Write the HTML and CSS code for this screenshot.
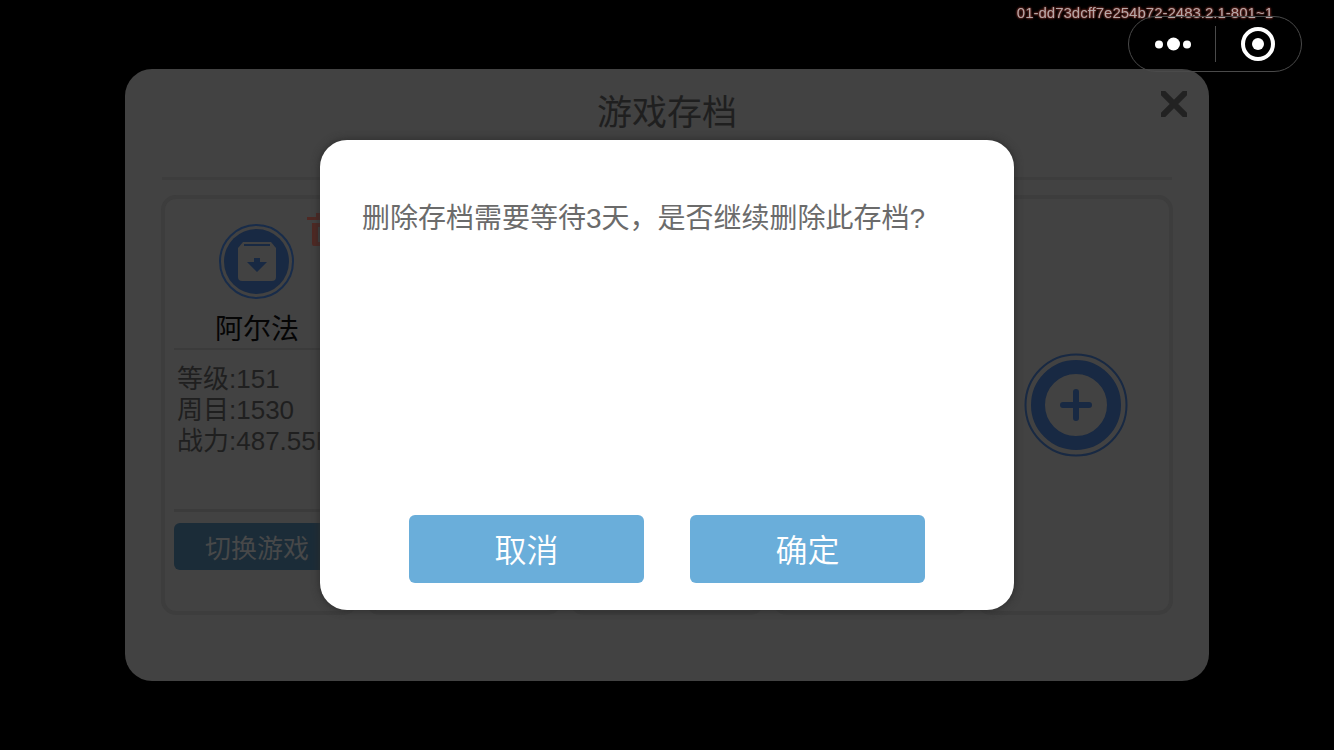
FILE: index.html
```html
<!DOCTYPE html>
<html lang="zh-CN">
<head>
<meta charset="utf-8">
<meta name="viewport" content="width=device-width, initial-scale=1">
<title>游戏存档</title>
<link rel="stylesheet" href="styles.css">
</head>
<body>
<main class="stage">
  <section class="panel">
    <header class="panel-header">
      <h1 class="panel-title">游戏存档</h1>
      <button class="close" type="button" aria-label="关闭">
        <svg width="26" height="26" viewBox="0 0 26 26"><path d="M2 2 L24 24 M24 2 L2 24" stroke="currentColor" stroke-width="6" stroke-linecap="round"/></svg>
      </button>
    </header>
    <div class="slots">
      <article class="slot">
        <button class="trash" type="button" aria-label="删除">
          <svg width="31" height="34" viewBox="0 0 31 34"><path fill="currentColor" fill-rule="evenodd" d="M0 4H9V0H22V4H31V7H0Z M5 10H26V31Q26 33 24 33H7Q5 33 5 31Z M11 14V29H14V14Z M17 14V29H20V14Z"/></svg>
        </button>
        <svg class="save-icon" width="76" height="76" viewBox="0 0 76 76">
          <circle cx="37.500" cy="37.500" r="36.5" fill="none" stroke="#182c4a" stroke-width="2"/>
          <circle cx="37.500" cy="37.500" r="32.5" fill="#182943"/>
          <path d="M24 18H52L57 24V53Q57 57 53 57H23Q19 57 19 53V24Z" fill="#424242"/>
          <path d="M25 21H51" stroke="#182943" stroke-width="2"/>
          <path d="M35 34H41V38H48L38 48L28 38H35Z" fill="#182943"/>
        </svg>
        <h2 class="slot-name">阿尔法</h2>
        <div class="stats">
          <p>等级:151</p>
          <p>周目:1530</p>
          <p>战力:487.55M</p>
        </div>
        <button class="switch" type="button">切换游戏</button>
      </article>
      <article class="slot"></article>
      <article class="slot"></article>
      <article class="slot"></article>
      <article class="slot slot-empty">
        <button class="add" type="button" aria-label="新建存档">
          <svg width="104" height="104" viewBox="0 0 104 104" fill="none" stroke="#182943">
            <circle cx="52" cy="52" r="50.5" stroke-width="2"/>
            <circle cx="52" cy="52" r="38" stroke-width="14"/>
            <path d="M52 39V65M39 52H65" stroke-width="6" stroke-linecap="round"/>
          </svg>
        </button>
      </article>
    </div>
  </section>

  <section class="dialog" role="dialog" aria-modal="true" aria-labelledby="message">
    <p class="message" id="message">删除存档需要等待3天，是否继续删除此存档?</p>
    <div class="actions">
      <button class="action" type="button">取消</button>
      <button class="action" type="button">确定</button>
    </div>
  </section>
</main>

<p class="build">01-dd73dcff7e254b72-2483.2.1-801~1</p>
<nav class="capsule">
  <button class="capsule-button" type="button" aria-label="更多">
    <svg width="38" height="16" viewBox="0 0 38 16" fill="#fff"><circle cx="6" cy="8.500" r="4"/><circle cx="20.500" cy="8" r="6.500"/><circle cx="34" cy="8.500" r="4"/></svg>
  </button>
  <button class="capsule-button" type="button" aria-label="退出">
    <svg width="34" height="34" viewBox="0 0 34 34"><circle cx="17" cy="17" r="15" fill="none" stroke="#fff" stroke-width="4"/><circle cx="17" cy="17" r="6" fill="#fff"/></svg>
  </button>
</nav>
</body>
</html>
```
FILE: styles.css
```css
* { box-sizing: border-box; }

body, h1, h2, p { margin: 0; font-weight: 400; }

body {
  background: #000;
  font-family: "Liberation Sans", "Noto Sans CJK SC", sans-serif;
}

button {
  padding: 0;
  border: 0;
  background: none;
  color: inherit;
  font: inherit;
}

svg { display: block; }

.stage {
  display: grid;
  place-items: center;
  min-height: 100vh;
}

.panel, .dialog { grid-area: 1 / 1; }

.panel {
  width: 100%;
  max-width: 1084px;
  padding: 0 36px 66px;
  border-radius: 27px;
  background: #424242;
  color: #1f1f1f;
}

.panel-header {
  position: relative;
  height: 111px;
  margin: 0 1px 15px;
  padding-top: 19px;
  border-bottom: 3px solid #3d3d3d;
  text-align: center;
}

.panel-title { font-size: 35px; line-height: 50px; }

.close {
  position: absolute;
  top: 22px;
  right: -15px;
  color: #222;
}

.slots {
  display: grid;
  grid-template-columns: repeat(5, 1fr);
  gap: 7px;
}

.slot {
  position: relative;
  display: flex;
  flex-direction: column;
  align-items: center;
  min-width: 0;
  min-height: 420px;
  padding: 25px 14px 0 9px;
  border: 4px solid #3d3d3d;
  border-radius: 15px;
}

.slot-empty {
  justify-content: center;
  padding: 0 0 0 2px;
}

.trash {
  position: absolute;
  top: 14px;
  right: 16px;
  color: #4f2823;
}

.slot-name {
  width: 100%;
  height: 50px;
  padding-top: 10px;
  border-bottom: 2px solid #3b3b3b;
  color: #050505;
  font-size: 28px;
  line-height: 40px;
  text-align: center;
}

.stats {
  width: 100%;
  height: 162px;
  padding: 14px 3px 0;
  border-bottom: 3px solid #3b3b3b;
  font-size: 26px;
  line-height: 31px;
  white-space: nowrap;
}

.switch {
  width: 100%;
  height: 47px;
  margin-top: 11px;
  border-radius: 6px;
  background: #1b2c38;
  color: #474849;
  font-size: 26px;
}

.dialog {
  z-index: 1;
  display: flex;
  flex-direction: column;
  justify-content: space-between;
  width: 100%;
  max-width: 694px;
  min-height: 470px;
  padding: 59px 42px 27px;
  border-radius: 27px;
  background: #fff;
  box-shadow: 0 0 8px #2a2a2a;
}

.message {
  color: #6b6b6b;
  font-size: 28px;
  line-height: 40px;
}

.actions {
  display: flex;
  justify-content: center;
  gap: 46px;
}

.action {
  width: 235px;
  height: 68px;
  padding-bottom: 2px;
  border-radius: 6px;
  background: #6aaeda;
  color: #fff;
  font-size: 32px;
  font-weight: 350;
}

.build {
  position: fixed;
  top: 4px;
  right: 61px;
  z-index: 2;
  color: #b5a8a8;
  font-size: 15px;
  line-height: 18px;
  text-shadow: 0 0 2px #7a3029, 0 0 2px #7a3029, 0 0 3px #7a3029;
}

.capsule {
  position: fixed;
  top: 16px;
  right: 32px;
  z-index: 3;
  display: flex;
  align-items: center;
  width: 174px;
  height: 56px;
  border: 1px solid #4a4a4a;
  border-radius: 28px;
}

.capsule-button {
  display: grid;
  flex: 1;
  place-items: center;
  height: 36px;
}

.capsule-button + .capsule-button { border-left: 1px solid #4a4a4a; }
```
